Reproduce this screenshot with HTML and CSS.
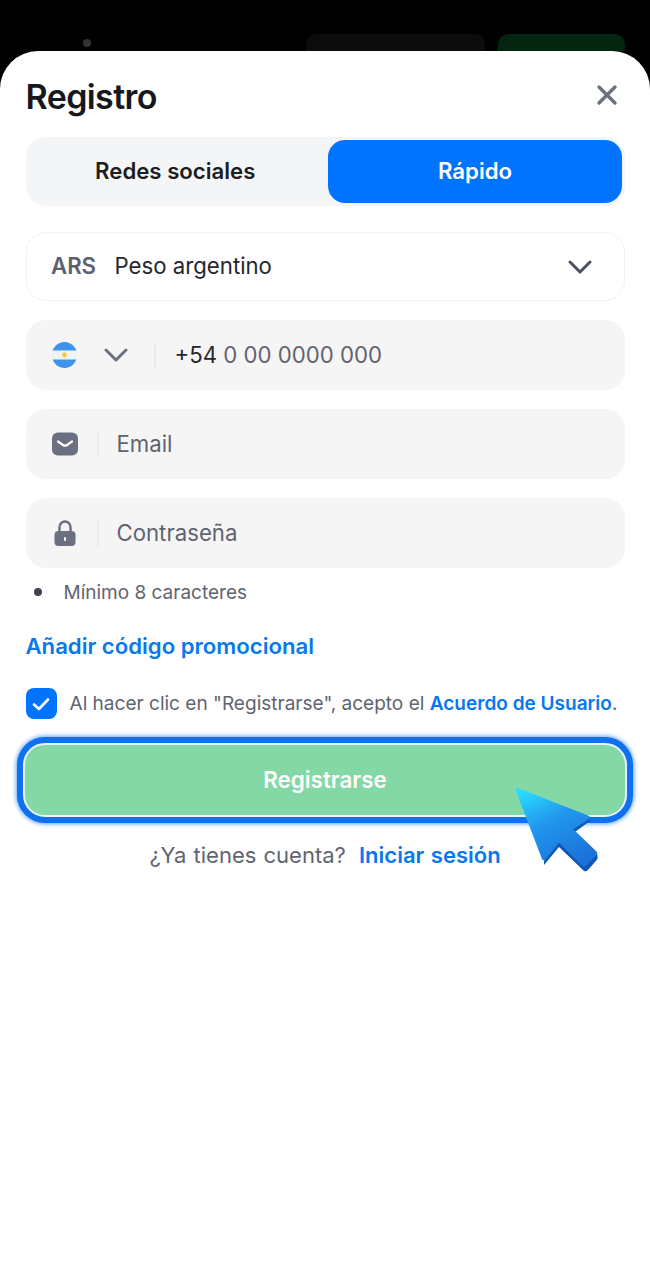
FILE: index.html
```html
<!DOCTYPE html>
<html lang="es">
  <head>
    <meta charset="utf-8">
    <title>Registro</title>
    <link rel="stylesheet" href="styles.css">
  </head>
  <body>
    <div class="topbar">
      <div class="top-dot"></div>
      <div class="top-login"></div>
      <div class="top-signup"></div>
    </div>

    <div class="sheet">
      <div class="sheet-head">
        <h1 class="title">Registro</h1>
        <svg class="close" width="24" height="24" viewBox="0 0 24 24">
          <path d="M4 4 L20 20 M20 4 L4 20" stroke="#6b7080" stroke-width="3.4" stroke-linecap="round" fill="none"/>
        </svg>
      </div>

      <div class="tabs">
        <div class="tab">Redes sociales</div>
        <div class="tab active">Rápido</div>
      </div>

      <div class="currency">
        <span class="code">ARS</span>
        <span class="currency-name">Peso argentino</span>
        <svg class="currency-arrow" width="24" height="14" viewBox="0 0 24 14">
          <path d="M2 2 L12 12 L22 2" stroke="#4c5160" stroke-width="3" stroke-linecap="round" stroke-linejoin="round" fill="none"/>
        </svg>
      </div>

      <div class="field field-first">
        <svg class="flag" width="25" height="26" viewBox="0 0 25 26">
          <defs><clipPath id="flagClip"><ellipse cx="12.5" cy="13" rx="12.5" ry="13"/></clipPath></defs>
          <g clip-path="url(#flagClip)">
            <rect width="25" height="26" fill="#f1f2f4"/>
            <rect width="25" height="8.5" fill="#3f93ea"/>
            <rect y="17.5" width="25" height="8.5" fill="#3f93ea"/>
            <circle cx="12.5" cy="13" r="2.4" fill="#f6c545"/>
          </g>
        </svg>
        <svg class="flag-arrow" width="24" height="14" viewBox="0 0 24 14">
          <path d="M2 2 L12 12 L22 2" stroke="#6b7080" stroke-width="3" stroke-linecap="round" stroke-linejoin="round" fill="none"/>
        </svg>
        <div class="sep sep-phone"></div>
        <span class="phone"><span class="phone-code">+54</span> 0 00 0000 000</span>
      </div>

      <div class="field">
        <svg class="field-icon" width="26" height="24" viewBox="0 0 26 24">
          <rect width="26" height="23" y="0.5" rx="6" fill="#6b7080"/>
          <path d="M6 9.5 L11 13 Q13 14.3 15 13 L20 9.5" stroke="#fff" stroke-width="2.2" stroke-linecap="round" stroke-linejoin="round" fill="none"/>
        </svg>
        <div class="sep"></div>
        <span class="placeholder">Email</span>
      </div>

      <div class="field">
        <svg class="field-icon" width="26" height="26" viewBox="0 0 26 26">
          <path d="M7.5 13 V7 a5.5 5.5 0 0 1 11 0 V13" stroke="#6b7080" stroke-width="2.4" fill="none"/>
          <rect x="2.5" y="11" width="21" height="15" rx="4" fill="#6b7080"/>
          <rect x="12" y="17" width="2" height="4" rx="1" fill="#fff"/>
        </svg>
        <div class="sep"></div>
        <span class="placeholder">Contraseña</span>
      </div>

      <div class="hint"><span class="hint-dot"></span>Mínimo 8 caracteres</div>

      <a class="promo">Añadir código promocional</a>

      <div class="terms">
        <span class="checkbox">
          <svg width="20" height="16" viewBox="0 0 20 16">
            <path d="M3 8.5 L8 13 L17 3.5" stroke="#fff" stroke-width="2.6" stroke-linecap="round" stroke-linejoin="round" fill="none"/>
          </svg>
        </span>
        <span class="terms-text">Al hacer clic en "Registrarse", acepto el <a class="terms-link">Acuerdo de Usuario</a>.</span>
      </div>

      <div class="submit-wrap">
        <div class="submit">Registrarse</div>
      </div>

      <div class="login-row">¿Ya tienes cuenta? <a class="login-link">Iniciar sesión</a></div>

      <!-- big cursor sits over the button -->
      <svg class="cursor" width="110" height="100" viewBox="0 0 110 100">
        <defs>
          <linearGradient id="cursorFill" x1="0.1" y1="0" x2="0.65" y2="1">
            <stop offset="0" stop-color="#2be0ff"/>
            <stop offset="0.45" stop-color="#2297ee"/>
            <stop offset="1" stop-color="#1a72da"/>
          </linearGradient>
        </defs>
        <path d="M44 85 L59 67 L84 91 Q86 92 88 90 L97.5 79 L97.5 75 L73.5 53 L90 41 L90 37 L60 50 L44 81 Z" fill="#0f58b4"/>
        <path d="M15.5 10 Q15 7 18 8 L88 35.5 Q91.5 37 89 39 L73.3 49.3 L96.5 71.5 Q98 73 96.5 75 L86 85.5 Q84 87.5 82 85.5 L59 62.7 L45.5 79.5 Q43.5 81.5 42 79 Z" fill="url(#cursorFill)"/>
      </svg>
    </div>
  </body>
</html>
```

FILE: styles.css
```css
html, body {
  margin: 0;
  padding: 0;
}

body {
  width: 650px;
  height: 1280px;
  background: #000;
  font-family: Inter, "Liberation Sans", sans-serif;
  overflow: hidden;
  position: relative;
}

.topbar {
  height: 51px;
  display: flex;
  align-items: flex-end;
  padding-left: 83px;
  padding-right: 25px;
  gap: 13px;
}

.top-dot {
  width: 8px;
  height: 8px;
  border-radius: 50%;
  background: #333;
  margin-bottom: 4px;
  margin-right: auto;
}

.top-login {
  width: 179px;
  height: 17px;
  background: #0c0c0c;
  border-radius: 10px 10px 0 0;
}

.top-signup {
  width: 127px;
  height: 17px;
  background: #04250f;
  border-radius: 10px 10px 0 0;
}

.sheet {
  position: relative;
  height: 1229px;
  background: #fff;
  border-radius: 38px 38px 0 0;
  padding: 0 25.5px;
  box-sizing: border-box;
}

.sheet-head {
  height: 86px;
  display: flex;
  align-items: center;
  justify-content: space-between;
  padding-right: 6px;
}

.title {
  margin: 0;
  font-size: 34px;
  font-weight: 600;
  letter-spacing: -0.6px;
  color: #17181c;
  position: relative;
  top: 2px;
}

.close {
  position: relative;
  top: 1px;
}

.tabs {
  height: 69px;
  background: #f4f5f7;
  border-radius: 20px;
  display: flex;
  padding: 3px 2.5px 3px 0;
  box-sizing: border-box;
}

.tab {
  flex: 1;
  display: flex;
  align-items: center;
  justify-content: center;
  font-size: 22.2px;
  font-weight: 600;
  color: #1c1d22;
  border-radius: 17px;
  padding: 0 3px 2px 0;
}

.tab.active {
  flex: 0 0 294px;
  background: #0074ff;
  color: #fff;
  padding-right: 0;
}

.currency {
  margin-top: 26px;
  height: 69px;
  border: 1px solid #f1f2f4;
  border-radius: 20px;
  box-sizing: border-box;
  display: flex;
  align-items: center;
  padding: 0 32px 0 24.5px;
  font-size: 22.2px;
}

.code {
  color: #5c6170;
  font-weight: 600;
  margin-right: 18.5px;
  padding-bottom: 2px;
}

.currency-name {
  color: #24262c;
  flex: 1;
  padding-bottom: 2px;
}

.field {
  margin-top: 19px;
  height: 70px;
  background: #f5f5f6;
  border-radius: 20px;
  display: flex;
  align-items: center;
  padding-left: 26px;
  font-size: 22.2px;
}

.flag-arrow {
  margin-left: 27px;
}

.sep {
  width: 2px;
  height: 25px;
  background: #e9eaec;
  margin: 0 18px 0 19px;
}

.sep.sep-phone {
  margin: 0 19px 0 26px;
}

.field-icon {
  flex: none;
}

.phone {
  color: #5f6470;
  padding-bottom: 2px;
}

.phone-code {
  color: #24262c;
}

.placeholder {
  color: #5f6470;
  padding-bottom: 2px;
}

.hint {
  margin-top: 12px;
  height: 24px;
  display: flex;
  align-items: center;
  color: #5f6470;
  font-size: 19px;
}

.hint-dot {
  width: 8px;
  height: 8px;
  border-radius: 50%;
  background: #3f4350;
  margin: 0 22px 0 8px;
}

.promo {
  display: block;
  margin-top: 29px;
  font-size: 22.15px;
  font-weight: 600;
  color: #0878ec;
}

.terms {
  margin-top: 29px;
  display: flex;
  align-items: center;
  gap: 13px;
  font-size: 19.05px;
  color: #5f6470;
  white-space: nowrap;
}

.terms-text {
  padding-bottom: 1px;
}

.checkbox {
  width: 31px;
  height: 31px;
  border-radius: 8px;
  background: #0074ff;
  display: flex;
  align-items: center;
  justify-content: center;
  flex: none;
}

.terms-link {
  color: #0878ec;
  font-weight: 600;
}

.submit-wrap {
  margin: 18px -8.5px 0 -8.5px;
  height: 86px;
  box-sizing: border-box;
  border: 6px solid #0f70f0;
  border-radius: 28px;
  box-shadow: 0 0 4px 1px #5ba4fa;
  background: #e8f3fb;
  padding: 2px;
}

.submit {
  height: 100%;
  background: #84d8a5;
  border-radius: 20px;
  display: flex;
  align-items: center;
  justify-content: center;
  color: #fff;
  font-size: 22.4px;
  font-weight: 600;
  padding-bottom: 2px;
  box-sizing: border-box;
}

.login-row {
  margin-top: 19px;
  text-align: center;
  font-size: 22px;
  color: #5f6470;
  word-spacing: 1px;
}

.login-link {
  color: #0878ec;
  font-weight: 600;
  margin-left: 6px;
}

.cursor {
  position: absolute;
  left: 500px;
  top: 729px;
}
```
